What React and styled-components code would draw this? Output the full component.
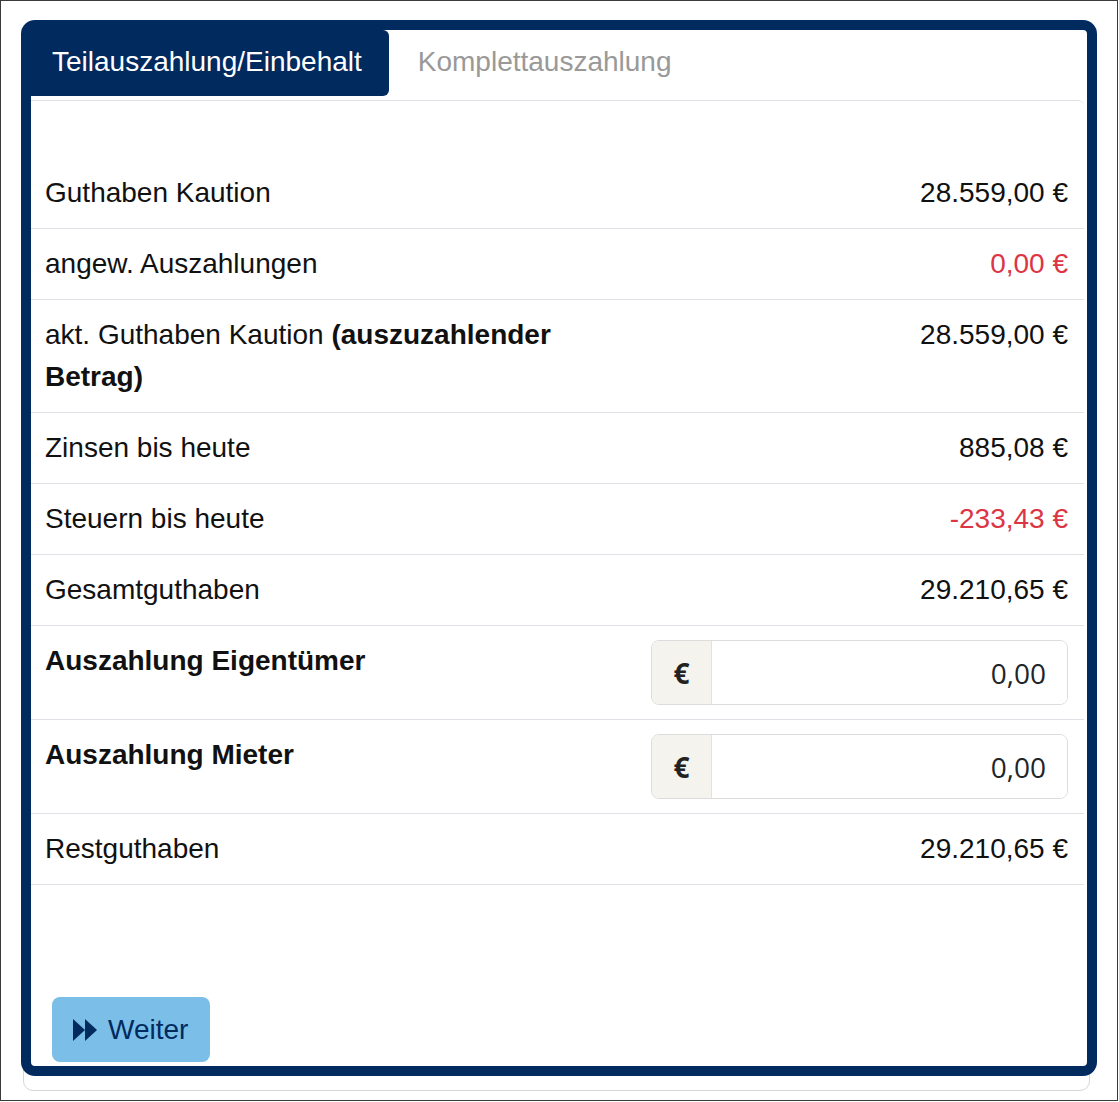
import React from "react";
import styled, { createGlobalStyle } from "styled-components";

const GlobalStyle = createGlobalStyle`
  html, body { margin: 0; padding: 0; background: #fff; }
  body { font-family: "Liberation Sans", Arial, sans-serif; }
  * { box-sizing: border-box; }
`;

const NAVY = "#012a5e";

const Page = styled.div`
  width: 1118px;
  height: 1101px;
  border: 1px solid #3a3a3a;
  padding: 21px 0 0 22px;
  background: #fff;
`;

const Card = styled.div`
  width: 1067px;
  border: 1px solid #d6d6d6;
  border-radius: 10px;
  padding-bottom: 14px;
`;

const Frame = styled.div`
  margin: -3px -8px 0 -3px;
  height: 1056px;
  border: 10px solid ${NAVY};
  border-radius: 14px;
  background: #fff;
  display: flex;
  flex-direction: column;
`;

const Nav = styled.div`
  display: flex;
  align-items: flex-start;
  height: 70px;
  flex: none;
`;

const Tab = styled.div`
  font-size: 28px;
  line-height: 42px;
  padding: 11px 27px 13px 21px;
  white-space: nowrap;
  color: ${(p) => (p.$active ? "#fff" : "#999")};
  background: ${(p) => (p.$active ? NAVY : "transparent")};
  border-radius: 0 6px 6px 0;
  margin-left: ${(p) => (p.$active ? "0" : "8px")};
`;

const Content = styled.div`
  flex: 1;
  display: flex;
  flex-direction: column;
  border-top: 1px solid #dee2e6;
  border-top-right-radius: 6px;
  margin-right: 3px;
  padding-top: 57px;
`;

const Row = styled.div`
  display: grid;
  grid-template-columns: 1fr 417px;
  column-gap: 14px;
  align-items: start;
  padding: 14px 16px 14px 14px;
  border-bottom: 1px solid #dee2e6;
  font-size: 28px;
  line-height: 42px;
  color: #111;
`;

const Label = styled.div`
  font-weight: ${(p) => (p.$bold ? 700 : 400)};
  b { font-weight: 700; }
`;

const Value = styled.div`
  text-align: right;
  white-space: nowrap;
  color: ${(p) => (p.$neg ? "#dc3545" : "#111")};
`;

const InputGroup = styled.div`
  display: flex;
  height: 65px;
  border: 1px solid #dcdcdc;
  border-radius: 8px;
  overflow: hidden;
`;

const Addon = styled.div`
  width: 60px;
  flex: none;
  display: flex;
  align-items: center;
  justify-content: center;
  background: #f4f3ee;
  border-right: 1px solid #e2e2e2;
  font-family: "Open Sans", "Liberation Sans", sans-serif;
  font-weight: 700;
  font-size: 28px;
  color: #222;
`;

const Amount = styled.input`
  flex: 1;
  min-width: 0;
  border: none;
  outline: none;
  background: #fff;
  text-align: right;
  padding: 0 21px 0 10px;
  font-family: "Open Sans", "Liberation Sans", sans-serif;
  font-size: 28px;
  color: #212529;
`;

const Spacer = styled.div`
  flex: 1;
`;

const Button = styled.button`
  align-self: flex-start;
  margin: 0 0 4px 21px;
  height: 65px;
  padding: 0 22px 0 21px;
  display: inline-flex;
  align-items: center;
  gap: 11px;
  border: none;
  border-radius: 8px;
  background: #7bbfe8;
  color: ${NAVY};
  font-family: "Liberation Sans", Arial, sans-serif;
  font-size: 28px;
  line-height: 42px;
  cursor: pointer;
`;

const ForwardIcon = () => (
  <svg width="24" height="22" viewBox="0 0 24 22" aria-hidden="true">
    <polygon points="0,0 12,11 0,22" fill={NAVY} />
    <polygon points="12,0 24,11 12,22" fill={NAVY} />
  </svg>
);

const rows = [
  { label: "Guthaben Kaution", value: "28.559,00 €" },
  { label: "angew. Auszahlungen", value: "0,00 €", neg: true },
  {
    label: (
      <>
        akt. Guthaben Kaution <b>(auszuzahlender Betrag)</b>
      </>
    ),
    value: "28.559,00 €",
  },
  { label: "Zinsen bis heute", value: "885,08 €" },
  { label: "Steuern bis heute", value: "-233,43 €", neg: true },
  { label: "Gesamtguthaben", value: "29.210,65 €" },
  { label: "Auszahlung Eigentümer", input: true },
  { label: "Auszahlung Mieter", input: true },
  { label: "Restguthaben", value: "29.210,65 €" },
];

export default function App() {
  return (
    <>
      <GlobalStyle />
      <Page>
        <Card>
          <Frame>
            <Nav>
              <Tab $active>Teilauszahlung/Einbehalt</Tab>
              <Tab>Komplettauszahlung</Tab>
            </Nav>
            <Content>
              {rows.map((r, i) => (
                <Row key={i}>
                  <Label $bold={r.input}>{r.label}</Label>
                  {r.input ? (
                    <InputGroup>
                      <Addon>€</Addon>
                      <Amount readOnly defaultValue="0,00" />
                    </InputGroup>
                  ) : (
                    <Value $neg={r.neg}>{r.value}</Value>
                  )}
                </Row>
              ))}
              <Spacer />
              <Button type="button">
                <ForwardIcon />
                Weiter
              </Button>
            </Content>
          </Frame>
        </Card>
      </Page>
    </>
  );
}
